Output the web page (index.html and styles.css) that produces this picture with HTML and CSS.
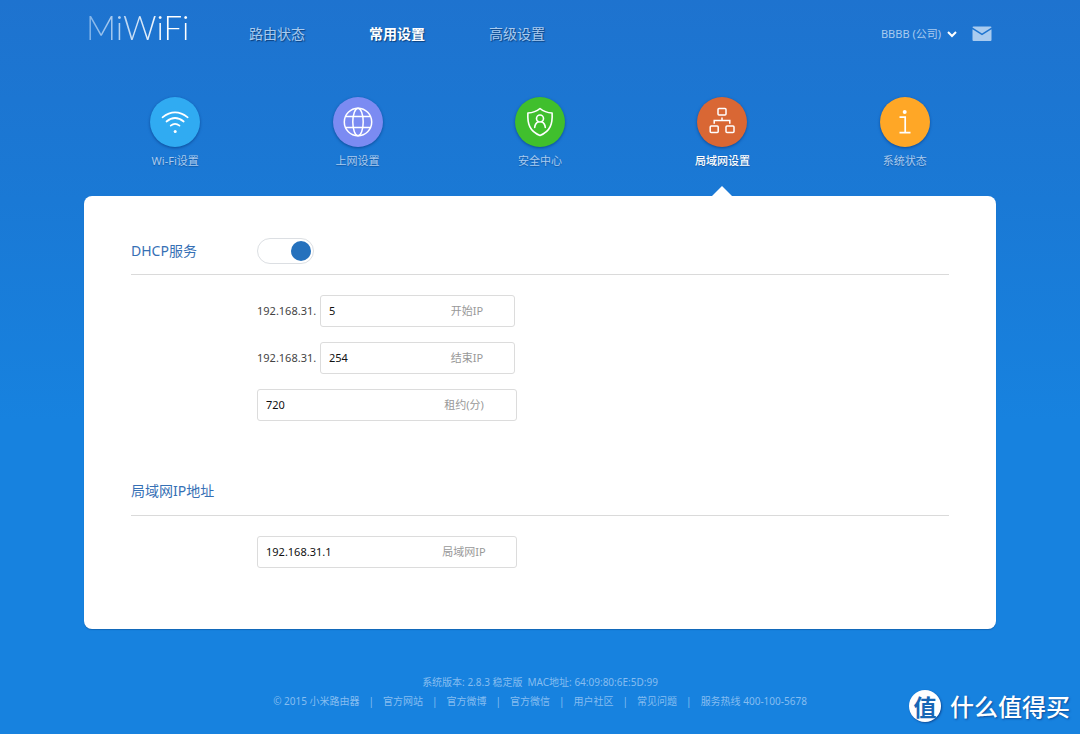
FILE: index.html
```html
<!DOCTYPE html>
<html lang="zh-CN">
<head>
<meta charset="utf-8">
<meta name="viewport" content="width=device-width, initial-scale=1">
<title>局域网设置 - MiWiFi</title>
<link rel="stylesheet" href="styles.css">
</head>
<body>
<div class="page">
  <header class="header">
    <a class="logo" href="#">MiWiFi</a>
    <nav class="nav">
      <a class="nav-link" href="#">路由状态</a>
      <a class="nav-link nav-link-active" href="#">常用设置</a>
      <a class="nav-link" href="#">高级设置</a>
    </nav>
    <div class="account">
      <button class="account-button" type="button">
        <span>BBBB (公司)</span>
        <svg width="10" height="7" viewBox="0 0 10 7" fill="none" stroke="#fff" stroke-width="2"><path d="M1 1l4 4 4-4"/></svg>
      </button>
      <button class="mail-button" type="button" aria-label="消息">
        <svg width="20" height="16" viewBox="0 0 20 16"><path d="M1.500.5h17a1 1 0 0 1 1 1L10 7.600.500 1.500a1 1 0 0 1 1-1z" fill="#a9cbef"/><path d="M.5 3.200 10 9.300l9.500-6.100V14a1 1 0 0 1-1 1h-17a1 1 0 0 1-1-1z" fill="#a9cbef"/></svg>
      </button>
    </div>
  </header>

  <nav class="tabs">
    <a class="tab" href="#">
      <span class="tab-icon tab-icon-wifi">
        <svg width="50" height="50" viewBox="0 0 50 50" fill="none" stroke="#fff" stroke-width="1.700" stroke-linecap="round"><path d="M12.500 20.300Q25 10.500 37.700 20.300M16.500 24.500Q25 17.500 33.700 24.500M20.700 28.700Q25 25 29.500 28.700"/><circle cx="25.200" cy="34.500" r="1.500" fill="#fff" stroke="none"/></svg>
      </span>
      <span>Wi-Fi设置</span>
    </a>
    <a class="tab" href="#">
      <span class="tab-icon tab-icon-net">
        <svg width="50" height="50" viewBox="0 0 50 50" fill="none" stroke="#fff" stroke-width="1.500"><circle cx="25" cy="25" r="13.700"/><ellipse cx="25" cy="25" rx="5.200" ry="13.700"/><path d="M12.800 19.500h24.400M12.800 30.500h24.400"/></svg>
      </span>
      <span>上网设置</span>
    </a>
    <a class="tab" href="#">
      <span class="tab-icon tab-icon-safe">
        <svg width="50" height="50" viewBox="0 0 50 50" fill="none" stroke="#fff" stroke-width="1.600" stroke-linejoin="round" stroke-linecap="round"><path d="M25 11.500C21.500 14.500 17 15.800 12.900 16c-.6 10.500 1.600 18.500 12.100 22.500C35.500 34.500 37.700 26.500 37.100 16 33 15.800 28.500 14.500 25 11.500z"/><circle cx="25" cy="21.500" r="3.500"/><path d="M19.700 30.500c.2-3 1.600-4.800 3.700-5.800M30.300 30.500c-.2-3-1.600-4.800-3.700-5.800"/></svg>
      </span>
      <span>安全中心</span>
    </a>
    <a class="tab tab-active" href="#" aria-current="page">
      <span class="tab-icon tab-icon-lan">
        <svg width="50" height="50" viewBox="0 0 50 50" fill="none" stroke="#fff" stroke-width="1.500"><rect x="21" y="11.500" width="8" height="6.500" rx="1"/><rect x="13.200" y="29" width="8" height="6.500" rx="1"/><rect x="29" y="29" width="8" height="6.500" rx="1"/><path d="M25 20.500v3M17.200 26.700v-3.200h15.600v3.200"/></svg>
      </span>
      <span>局域网设置</span>
    </a>
    <a class="tab" href="#">
      <span class="tab-icon tab-icon-info">
        <svg width="50" height="50" viewBox="0 0 50 50" fill="none" stroke="#fff" stroke-width="1.700"><circle cx="24.700" cy="15" r="2" fill="#fff" stroke="none"/><path d="M19.500 20.200h5.700v15.300M19.500 35.600h11"/></svg>
      </span>
      <span>系统状态</span>
    </a>
  </nav>

  <main class="panel">
    <section class="section section-dhcp">
      <div class="section-head">
        <h2 class="section-title"><label for="dhcp">DHCP服务</label></h2>
        <input class="switch" id="dhcp" type="checkbox" checked>
      </div>
      <div class="fields">
        <div class="field-row">
          <span class="prefix">192.168.31.</span>
          <div class="field field-short">
            <input class="field-input" id="start-ip" type="text" value="5">
            <label class="field-label" for="start-ip">开始IP</label>
          </div>
        </div>
        <div class="field-row">
          <span class="prefix">192.168.31.</span>
          <div class="field field-short">
            <input class="field-input" id="end-ip" type="text" value="254">
            <label class="field-label" for="end-ip">结束IP</label>
          </div>
        </div>
        <div class="field-row">
          <div class="field">
            <input class="field-input" id="lease" type="text" value="720">
            <label class="field-label" for="lease">租约(分)</label>
          </div>
        </div>
      </div>
    </section>

    <section class="section">
      <div class="section-head">
        <h2 class="section-title">局域网IP地址</h2>
      </div>
      <div class="fields">
        <div class="field-row">
          <div class="field">
            <input class="field-input" id="lan-ip" type="text" value="192.168.31.1">
            <label class="field-label" for="lan-ip">局域网IP</label>
          </div>
        </div>
      </div>
    </section>
  </main>

  <footer class="footer">
    <div class="footer-row footer-version"><span>系统版本: 2.8.3 稳定版</span><span>MAC地址: 64:09:80:6E:5D:99</span></div>
    <div class="footer-row">
      <span>© 2015 小米路由器</span><span>|</span>
      <a href="#">官方网站</a><span>|</span>
      <a href="#">官方微博</a><span>|</span>
      <a href="#">官方微信</a><span>|</span>
      <a href="#">用户社区</a><span>|</span>
      <a href="#">常见问题</a><span>|</span>
      <span>服务热线 400-100-5678</span>
    </div>
  </footer>
</div>
<div class="watermark"><span class="watermark-badge">值</span><span>什么值得买</span></div>
</body>
</html>
```
FILE: styles.css
```css
* { box-sizing: border-box; }

body {
  margin: 0;
  min-height: 100vh;
  position: relative;
  background: #1782df linear-gradient(#1e73cf 0, #1a79d5 200px, #1782df 420px) no-repeat;
  color: #444;
  font: 11px/16px "Noto Sans", "Noto Sans CJK SC", sans-serif;
}

a { color: inherit; text-decoration: none; }

button {
  padding: 0;
  border: 0;
  background: none;
  color: inherit;
  font: inherit;
  cursor: pointer;
}

svg { display: block; }

.page {
  max-width: 912px;
  margin: 0 auto;
}

.header {
  display: flex;
  align-items: center;
  height: 68px;
  padding: 0 4px 0 2px;
  color: #a9cbef;
}

.logo {
  width: 163px;
  padding-bottom: 14px;
  font: 300 33px/40px Lato, sans-serif;
  background: linear-gradient(90deg, #7fb2e8, #fff 80px);
  background-clip: text;
  color: transparent;
}

.nav {
  display: flex;
  gap: 64px;
  font-size: 14px;
  line-height: 20px;
}

.nav-link { text-shadow: 1px 1px 1px #0b3f7c; }

.nav-link-active {
  color: #fff;
  font-weight: 700;
}

.account {
  display: flex;
  align-items: center;
  gap: 15px;
  margin-left: auto;
}

.account-button {
  display: flex;
  align-items: center;
  gap: 6px;
}

.tabs {
  display: grid;
  grid-template-columns: repeat(5, 1fr);
  padding-top: 29px;
}

.tab {
  display: flex;
  flex-direction: column;
  align-items: center;
  gap: 6px;
  padding-bottom: 27px;
  color: #a9cbef;
  text-shadow: 0 1px 1px #1458a5;
}

.tab-active {
  position: relative;
  color: #fff;
  font-weight: 500;
}

.tab-active::after {
  content: "";
  position: absolute;
  bottom: 0;
  border: 10px solid transparent;
  border-top: 0;
  border-bottom-color: #fff;
}

.tab-icon {
  border-radius: 50%;
  box-shadow: 0 1px 3px #0d4c9a;
}

.tab-icon-wifi { background: #30abf2; }
.tab-icon-net { background: #7b8bf2; }
.tab-icon-safe { background: #40bf2d; }
.tab-icon-lan { background: #d96734; }
.tab-icon-info { background: #ffa726; }

.panel {
  padding: 36px 47px 61px;
  border-radius: 8px;
  background: #fff;
  box-shadow: 0 1px 1px #1266b6;
}

.section-dhcp { margin-bottom: 52px; }

.section-head {
  display: flex;
  align-items: center;
  height: 43px;
  padding-bottom: 6px;
  border-bottom: 1px solid #dadada;
}

.section-title {
  width: 126px;
  margin: 0;
  color: #3670b5;
  font-size: 14px;
  font-weight: 400;
  line-height: 20px;
}

.section-dhcp .section-head {
  padding: 0 0 5px;
}

.switch {
  appearance: none;
  display: flex;
  align-items: center;
  width: 57px;
  height: 26px;
  margin: 0;
  padding: 2px;
  border: 1px solid #dcdfe3;
  border-radius: 13px;
  background: #fff;
  cursor: pointer;
}

.switch::before {
  content: "";
  width: 20px;
  height: 20px;
  border-radius: 50%;
  background: #a8adb3;
}

.switch:checked { justify-content: flex-end; }
.switch:checked::before { background: #2571bd; }

.fields {
  display: flex;
  flex-direction: column;
  gap: 15px;
  padding: 20px 0 0 126px;
}

.field-row {
  display: flex;
  align-items: center;
}

.prefix { width: 63px; }

.field {
  display: flex;
  align-items: center;
  width: 260px;
  height: 32px;
  border: 1px solid #dcdcdc;
  border-radius: 3px;
}

.field-short { width: 195px; }

.field-input {
  flex: 1;
  min-width: 0;
  padding: 0 8px;
  border: 0;
  outline: 0;
  background: none;
  color: #111;
  font: inherit;
}

.field-label {
  width: 104px;
  color: #999;
  text-align: center;
}

.field-short .field-label { width: 94px; }

.footer {
  display: flex;
  flex-direction: column;
  gap: 3px;
  padding: 45px 0 14px;
  color: #86bdf0;
  font-size: 10px;
}

.footer-row {
  display: flex;
  justify-content: center;
  gap: 9px;
}

.footer-version { gap: 5px; }

.watermark {
  position: absolute;
  right: 10px;
  bottom: 11px;
  display: flex;
  align-items: center;
  gap: 9px;
  color: #fff;
  font: 500 24px/34px "Noto Sans CJK SC", sans-serif;
  text-shadow: 1px 1px 2px #0d4c9a;
}

.watermark-badge {
  width: 32px;
  height: 32px;
  border-radius: 50%;
  background: #fff;
  box-shadow: 1px 1px 2px #0d4c9a;
  color: #1766b5;
  font-size: 23px;
  font-weight: 700;
  line-height: 32px;
  text-align: center;
  text-shadow: none;
}
```
